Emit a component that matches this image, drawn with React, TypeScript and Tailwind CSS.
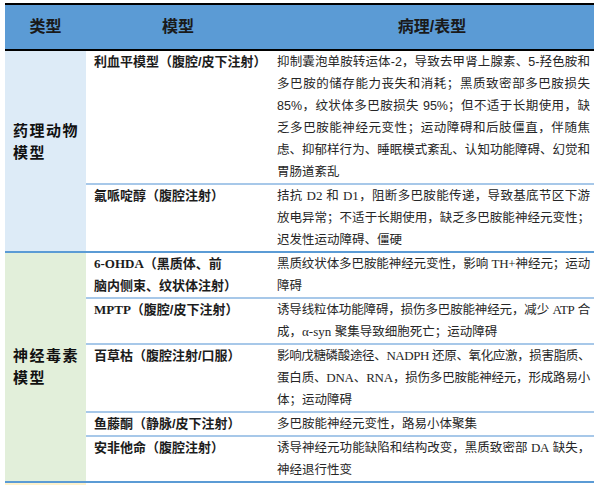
import type { ReactNode } from 'react'

const serif = "font-['Liberation_Serif','Noto_Sans_CJK_SC',serif] text-[13px]"

function Se({ children }: { children: ReactNode }) {
  return <span className={serif}>{children}</span>
}

// one printed line of the pathology column; justified unless it is a paragraph's last line
function L({ children, j = true, t = '' }: { children: ReactNode; j?: boolean; t?: string }) {
  return (
    <div className={`h-[22px] ${j ? 'text-justify [text-align-last:justify]' : ''} ${t}`}>
      {children}
    </div>
  )
}

function Row({ model, children, last = false }: { model: ReactNode; children: ReactNode; last?: boolean }) {
  return (
    <div className={`grid grid-cols-[184px_324px] ${last ? '' : 'border-b-2 border-[#a7c8e9]'}`}>
      <div className="pl-[8px] text-[13px] font-bold leading-[22px] text-[#1c1c1c]">{model}</div>
      <div className="pl-[7px] pr-[4px] text-[12.5px] leading-[22px] text-[#262626]">{children}</div>
    </div>
  )
}

export default function App() {
  return (
    <div className="min-h-screen bg-white font-['Liberation_Sans','Noto_Sans_CJK_SC',sans-serif]">
      <div className="ml-[5px] w-[589px] pt-[3px]">
        {/* header */}
        <div className="grid h-[48px] grid-cols-[81px_184px_324px] items-center border-y-2 border-black bg-[#5b9bd5] text-center text-[16px] font-bold text-[#1a1a1a]">
          <div>类型</div>
          <div>模型</div>
          <div>病理/表型</div>
        </div>

        {/* 药理动物模型 */}
        <div className="grid grid-cols-[81px_508px] border-b-2 border-[#5b9bd5]">
          <div className="bg-[#ddebf7] pl-[8px] pt-[69px] text-[15px] font-bold leading-[22px] tracking-[1.5px] text-[#111]">
            药理动物
            <br />
            模型
          </div>
          <div>
            <Row model="利血平模型（腹腔/皮下注射）">
              <L>抑制囊泡单胺转运体-2，导致去甲肾上腺素、5-羟色胺和</L>
              <L>多巴胺的储存能力丧失和消耗；黑质致密部多巴胺损失</L>
              <L>85%，纹状体多巴胺损失 95%；但不适于长期使用，缺</L>
              <L>乏多巴胺能神经元变性；运动障碍和后肢僵直，伴随焦</L>
              <L t="tracking-[-0.1px]">虑、抑郁样行为、睡眠模式紊乱、认知功能障碍、幻觉和</L>
              <L j={false}>胃肠道紊乱</L>
            </Row>
            <Row model="氟哌啶醇（腹腔注射）" last>
              <L>
                拮抗 <Se>D2</Se> 和 <Se>D1</Se>，阻断多巴胺能传递，导致基底节区下游
              </L>
              <L>放电异常；不适于长期使用，缺乏多巴胺能神经元变性；</L>
              <L j={false}>迟发性运动障碍、僵硬</L>
            </Row>
          </div>
        </div>

        {/* 神经毒素模型 */}
        <div className="grid grid-cols-[81px_508px] border-b-2 border-[#5b9bd5]">
          <div className="flex items-center bg-[#e2efda] pl-[8px] text-[15px] font-bold leading-[22px] tracking-[1.5px] text-[#111]">
            <div>
              神经毒素
              <br />
              模型
            </div>
          </div>
          <div>
            <Row
              model={
                <>
                  <Se>6-OHDA</Se>（黑质体、前
                  <br />
                  脑内侧束、纹状体注射）
                </>
              }
            >
              <L t="tracking-[-0.2px]">
                黑质纹状体多巴胺能神经元变性，影响 <Se>TH+</Se>神经元；运动
              </L>
              <L j={false}>障碍</L>
            </Row>
            <Row
              model={
                <>
                  <Se>MPTP</Se>（腹腔/皮下注射）
                </>
              }
            >
              <L t="tracking-[-0.35px]">
                诱导线粒体功能障碍，损伤多巴胺能神经元，减少 <Se>ATP</Se> 合
              </L>
              <L j={false}>
                成，<Se>α-syn</Se> 聚集导致细胞死亡；运动障碍
              </L>
            </Row>
            <Row model="百草枯（腹腔注射/口服）">
              <L t="tracking-[-0.45px]">
                影响戊糖磷酸途径、<Se>NADPH</Se> 还原、氧化应激，损害脂质、
              </L>
              <L t="tracking-[-0.25px]">
                蛋白质、<Se>DNA</Se>、<Se>RNA</Se>，损伤多巴胺能神经元，形成路易小
              </L>
              <L j={false}>体；运动障碍</L>
            </Row>
            <Row model="鱼藤酮（静脉/皮下注射）">
              <L j={false}>多巴胺能神经元变性，路易小体聚集</L>
            </Row>
            <Row model="安非他命（腹腔注射）" last>
              <L t="tracking-[-0.25px]">
                诱导神经元功能缺陷和结构改变，黑质致密部 <Se>DA</Se> 缺失，
              </L>
              <L j={false}>神经退行性变</L>
            </Row>
          </div>
        </div>

        {/* start of the next group, cut off by the frame */}
        <div className="grid h-[2px] grid-cols-[81px_508px]">
          <div className="bg-[#fff2cc]" />
          <div />
        </div>
      </div>
    </div>
  )
}
